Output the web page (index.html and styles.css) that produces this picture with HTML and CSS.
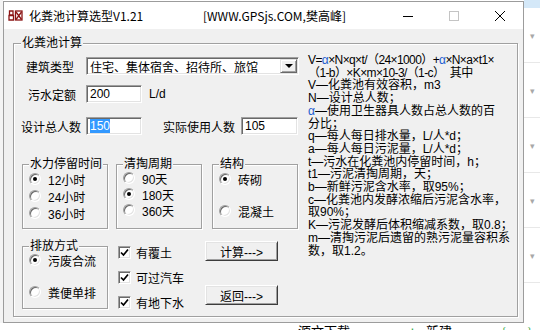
FILE: index.html
```html
<!DOCTYPE html>
<html lang="zh-CN">
<head>
    <meta charset="UTF-8" />
    <title>化粪池计算选型V1.21</title>
    <link rel="stylesheet" href="styles.css">
</head>
<body>
    <div class="desk">
        <div class="edge-left"></div>
        <div class="window">
            <div class="titlebar">
                <svg class="app-icon" width="15" height="11" viewBox="0 0 15 11">
                    <g fill="none" stroke="#8b1414" stroke-width="1.3">
                        <path d="M1.5 1h3.5v4h-3.5zM1 5.5h4.5v4.5h-4.5z"/>
                        <rect x="7.5" y="1" width="6.5" height="9"/>
                        <path d="M8 2l5.5 7.5M13.5 2l-5.5 7.5"/>
                    </g>
                </svg>
                <span class="title">化粪池计算选型V1.21</span>
                <span class="title-site">[WWW.GPSjs.COM,樊高峰]</span>
                <div class="caption">
                    <span class="cap-btn">
                        <svg width="10" height="10"><path d="M0 5.5h10" stroke="#000"/></svg>
                    </span>
                    <span class="cap-btn">
                        <svg width="10" height="10"><rect x="0.5" y="0.5" width="9" height="9" fill="none" stroke="#c4c4c4"/></svg>
                    </span>
                    <span class="cap-btn">
                        <svg width="10" height="10"><path d="M0 0L10 10M10 0L0 10" stroke="#000"/></svg>
                    </span>
                </div>
            </div>
            <div class="client">
                <div class="frame main-frame">
                    <span class="frame-title">化粪池计算</span>
                    <div class="form-col">
                        <div class="row row-type">
                            <span class="lbl lbl-type">建筑类型</span>
                            <div class="combo">
                                <span class="combo-text">住宅、集体宿舍、招待所、旅馆</span>
                                <span class="combo-btn"><i class="arrow"></i></span>
                            </div>
                        </div>
                        <div class="row row-quota">
                            <span class="lbl lbl-quota">污水定额</span>
                            <span class="edit edit-short">200</span>
                            <span class="unit">L/d</span>
                        </div>
                        <div class="row row-people">
                            <span class="lbl lbl-total">设计总人数</span>
                            <span class="edit edit-short"><span class="sel">150</span></span>
                            <span class="lbl lbl-actual">实际使用人数</span>
                            <span class="edit edit-actual">105</span>
                        </div>
                        <div class="opts">
                            <div class="frame sub-frame">
                                <span class="frame-title">水力停留时间</span>
                                <div class="radios radios-hours">
                                    <div class="opt"><span class="radio on"></span>12小时</div>
                                    <div class="opt"><span class="radio"></span>24小时</div>
                                    <div class="opt"><span class="radio"></span>36小时</div>
                                </div>
                            </div>
                            <div class="frame sub-frame frame-clean">
                                <span class="frame-title">清掏周期</span>
                                <div class="radios radios-clean">
                                    <div class="opt"><span class="radio"></span>90天</div>
                                    <div class="opt"><span class="radio on"></span>180天</div>
                                    <div class="opt"><span class="radio"></span>360天</div>
                                </div>
                            </div>
                            <div class="frame sub-frame frame-struct">
                                <span class="frame-title">结构</span>
                                <div class="radios radios-wide">
                                    <div class="opt"><span class="radio on"></span>砖砌</div>
                                    <div class="opt"><span class="radio"></span>混凝土</div>
                                </div>
                            </div>
                        </div>
                        <div class="bottom">
                            <div class="frame drain-frame">
                                <span class="frame-title">排放方式</span>
                                <div class="radios radios-drain">
                                    <div class="opt"><span class="radio on"></span>污废合流</div>
                                    <div class="opt"><span class="radio"></span>粪便单排</div>
                                </div>
                            </div>
                            <div class="checks">
                                <div class="chk"><span class="box"><svg width="9" height="9"><path d="M1 4.5l2.5 2.5 4.5-5.5" fill="none" stroke="#000" stroke-width="1.7"/></svg></span>有覆土</div>
                                <div class="chk"><span class="box"><svg width="9" height="9"><path d="M1 4.5l2.5 2.5 4.5-5.5" fill="none" stroke="#000" stroke-width="1.7"/></svg></span>可过汽车</div>
                                <div class="chk"><span class="box"><svg width="9" height="9"><path d="M1 4.5l2.5 2.5 4.5-5.5" fill="none" stroke="#000" stroke-width="1.7"/></svg></span>有地下水</div>
                            </div>
                            <div class="buttons">
                                <button class="btn">计算---&gt;</button>
                                <button class="btn">返回---&gt;</button>
                            </div>
                        </div>
                    </div>
                    <div class="formula">
                        <div class="eq">V=<span class="greek">α</span>×N×q×t/（24×1000）+<span class="greek">α</span>×N×a×t1×</div>
                        <div class="eq">（1-b）×K×m×10-3/（1-c）&nbsp;&nbsp;其中</div>
                        <div>V—化粪池有效容积，m3</div>
                        <div>N—设计总人数；</div>
                        <div><span class="greek">α</span>—使用卫生器具人数占总人数的百</div>
                        <div>分比；</div>
                        <div>q—每人每日排水量，L/人*d；</div>
                        <div>a—每人每日污泥量，L/人*d；</div>
                        <div>t—污水在化粪池内停留时间，h；</div>
                        <div>t1—污泥清掏周期，天；</div>
                        <div>b—新鲜污泥含水率，取95%；</div>
                        <div>c—化粪池内发酵浓缩后污泥含水率，</div>
                        <div>取90%；</div>
                        <div>K—污泥发酵后体积缩减系数，取0.8；</div>
                        <div>m—清掏污泥后遗留的熟污泥量容积系</div>
                        <div>数，取1.2。</div>
                    </div>
                </div>
            </div>
        </div>
        <div class="edge-right">
            <div class="edge-blue"></div>
            <div class="edge-row">▾</div>
            <div class="edge-row">▾</div>
            <div class="edge-row">▾</div>
            <div class="edge-row">▾</div>
            <div class="edge-row">▾</div>
        </div>
    </div>
    <div class="appbar">
        <span class="app-text app-down">源文下载</span>
        <span class="app-sep"></span>
        <span class="app-sep app-sep2"></span>
        <span class="app-plus">+</span>
        <span class="app-text app-new">新建</span>
        <span class="app-code">{··}</span>
        <span class="app-text app-set">设</span>
    </div>
</body>
</html>
```
FILE: styles.css
```css
* {
    box-sizing: border-box;
}
html, body {
    margin: 0;
    height: 100%;
}
body {
    background: #fff;
    color: #000;
    font-family: "Noto Sans CJK SC", "Noto Sans", sans-serif;
    font-size: 12px;
    overflow: hidden;
}
.desk {
    display: flex;
    height: 323px;
}
.edge-left {
    width: 3px;
    background: #f4f4f4;
}
.window {
    width: 521px;
    height: 322px;
    margin-top: 1px;
    border: 1px solid #9c9c9c;
    background: #f0f0f0;
    display: flex;
    flex-direction: column;
}
.titlebar {
    flex: none;
    height: 27px;
    background: #fff;
    display: flex;
    align-items: center;
}
.app-icon {
    margin-left: 4px;
}
.title {
    margin-left: 6px;
    width: 174px;
    white-space: nowrap;
}
.title-site {
    white-space: nowrap;
}
.caption {
    margin-left: auto;
    display: flex;
    height: 100%;
}
.cap-btn {
    width: 46px;
    display: flex;
    align-items: center;
    justify-content: center;
}
.cap-btn svg {
    display: block;
}
.client {
    flex: 1;
    display: flex;
    padding: 14px 5px 5px 9px;
    font-family: "Liberation Sans", "Noto Sans CJK SC", sans-serif;
}
.frame {
    position: relative;
    border: 1px solid #a0a0a0;
    box-shadow: inset 1px 1px 0 #fff, 1px 1px 0 #fff;
}
.frame-title {
    position: absolute;
    top: -8px;
    left: 6px;
    padding: 0 1px;
    line-height: 14px;
    background: #f0f0f0;
    white-space: nowrap;
}
.main-frame {
    flex: 1;
    display: flex;
    padding: 13px 0 0 8px;
}
.main-frame > .frame-title {
    left: 7px;
}
.form-col {
    flex: none;
    width: 286px;
    display: flex;
    flex-direction: column;
}
.row {
    display: flex;
    align-items: center;
    height: 18px;
    white-space: nowrap;
}
.row-quota {
    margin-top: 10px;
}
.row-people {
    margin-top: 14px;
}
.lbl {
    flex: none;
}
.lbl-type {
    margin-left: 4px;
    width: 60px;
}
.lbl-quota {
    margin-left: 6px;
    width: 58px;
}
.lbl-total {
    margin-left: -1px;
    width: 65px;
}
.lbl-actual {
    margin-left: 21px;
    width: 78px;
}
.combo, .edit {
    height: 18px;
    background: #fff;
    border: 1px solid;
    border-color: #a0a0a0 #fff #fff #a0a0a0;
    box-shadow: inset 1px 1px 0 #696969, inset -1px -1px 0 #e3e3e3;
}
.combo {
    width: 213px;
    display: flex;
    align-items: center;
    padding: 1px;
}
.combo-text {
    padding-left: 2px;
}
.combo-btn {
    margin-left: auto;
    width: 17px;
    height: 14px;
    background: #f0f0f0;
    border: 1px solid;
    border-color: #e3e3e3 #696969 #696969 #e3e3e3;
    box-shadow: inset 1px 1px 0 #fff, inset -1px -1px 0 #a0a0a0;
    display: flex;
    align-items: center;
    justify-content: center;
}
.arrow {
    width: 0;
    height: 0;
    border-left: 4px solid transparent;
    border-right: 4px solid transparent;
    border-top: 4px solid #000;
}
.edit {
    display: flex;
    align-items: center;
    padding-left: 3px;
    line-height: 14px;
}
.edit-short {
    width: 56px;
}
.edit-actual {
    width: 57px;
}
.sel {
    background: #3399ff;
    color: #fff;
}
.unit {
    margin-left: 7px;
}
.opts {
    display: flex;
    margin-top: 29px;
}
.sub-frame {
    width: 86px;
    height: 65px;
}
.frame-clean {
    margin-left: 8px;
}
.frame-struct {
    margin-left: 10px;
}
.radios {
    display: flex;
    flex-direction: column;
    padding-top: 6px;
    gap: 1px;
}
.radios-clean {
    padding-top: 5px;
    gap: 0;
}
.radios-wide {
    gap: 16px;
}
.radios-drain {
    padding-top: 5px;
    gap: 16px;
}
.opt {
    display: flex;
    align-items: center;
    height: 16px;
    padding-left: 6px;
    white-space: nowrap;
}
.radio {
    flex: none;
    width: 12px;
    height: 12px;
    margin-right: 7px;
    border-radius: 50%;
    background: #fff;
    border: 1px solid;
    border-color: #a0a0a0 #fff #fff #a0a0a0;
    box-shadow: inset 1px 1px 0 #696969, inset -1px -1px 0 #e3e3e3;
    display: flex;
    align-items: center;
    justify-content: center;
}
.radio.on::after {
    content: "";
    width: 4px;
    height: 4px;
    border-radius: 50%;
    background: #000;
}
.bottom {
    display: flex;
    align-items: flex-start;
    margin-top: 12px;
}
.drain-frame {
    width: 86px;
    height: 63px;
    margin-top: 5px;
}
.checks {
    width: 87px;
    margin: 5px 0 0 10px;
    display: flex;
    flex-direction: column;
    gap: 12px;
}
.chk {
    display: flex;
    align-items: center;
    height: 13px;
    white-space: nowrap;
}
.box {
    flex: none;
    width: 13px;
    height: 13px;
    margin-right: 5px;
    background: #fff;
    border: 1px solid;
    border-color: #a0a0a0 #fff #fff #a0a0a0;
    box-shadow: inset 1px 1px 0 #696969, inset -1px -1px 0 #e3e3e3;
    display: flex;
    align-items: center;
    justify-content: center;
}
.box svg {
    display: block;
}
.buttons {
    display: flex;
    flex-direction: column;
    gap: 24px;
}
.btn {
    width: 73px;
    height: 20px;
    padding: 0;
    font: inherit;
    color: #000;
    background: #f0f0f0;
    border: 1px solid;
    border-color: #fff #3c3c3c #3c3c3c #fff;
    box-shadow: inset 1px 1px 0 #e3e3e3, inset -1px -1px 0 #a0a0a0;
}
.formula {
    margin-top: -3px;
    line-height: 12.7px;
    white-space: nowrap;
}
.eq {
    letter-spacing: -0.6px;
}
.greek {
    color: #1f5fd0;
}
.edge-right {
    flex: 1;
    display: flex;
    flex-direction: column;
}
.edge-blue {
    height: 8px;
    background: #d4e8f8;
}
.edge-row {
    height: 55px;
    border-bottom: 1px solid #e8e8e8;
    display: flex;
    align-items: center;
    justify-content: center;
    color: #a8a8a8;
    font-size: 9px;
}
.appbar {
    display: flex;
    align-items: flex-start;
    height: 20px;
    font-size: 13px;
    line-height: 16px;
    white-space: nowrap;
}
.app-down {
    margin-left: 298px;
}
.app-sep {
    margin-left: 15px;
    width: 1px;
    height: 16px;
    background: #e0e0e0;
}
.app-sep2 {
    margin-left: 13px;
}
.app-plus {
    margin-left: 30px;
    color: #2aa63c;
    font-size: 16px;
}
.app-new {
    margin-left: 9px;
}
.app-code {
    margin-left: 50px;
    color: #2aa63c;
    font-size: 11px;
}
.app-set {
    margin-left: 10px;
}
```
